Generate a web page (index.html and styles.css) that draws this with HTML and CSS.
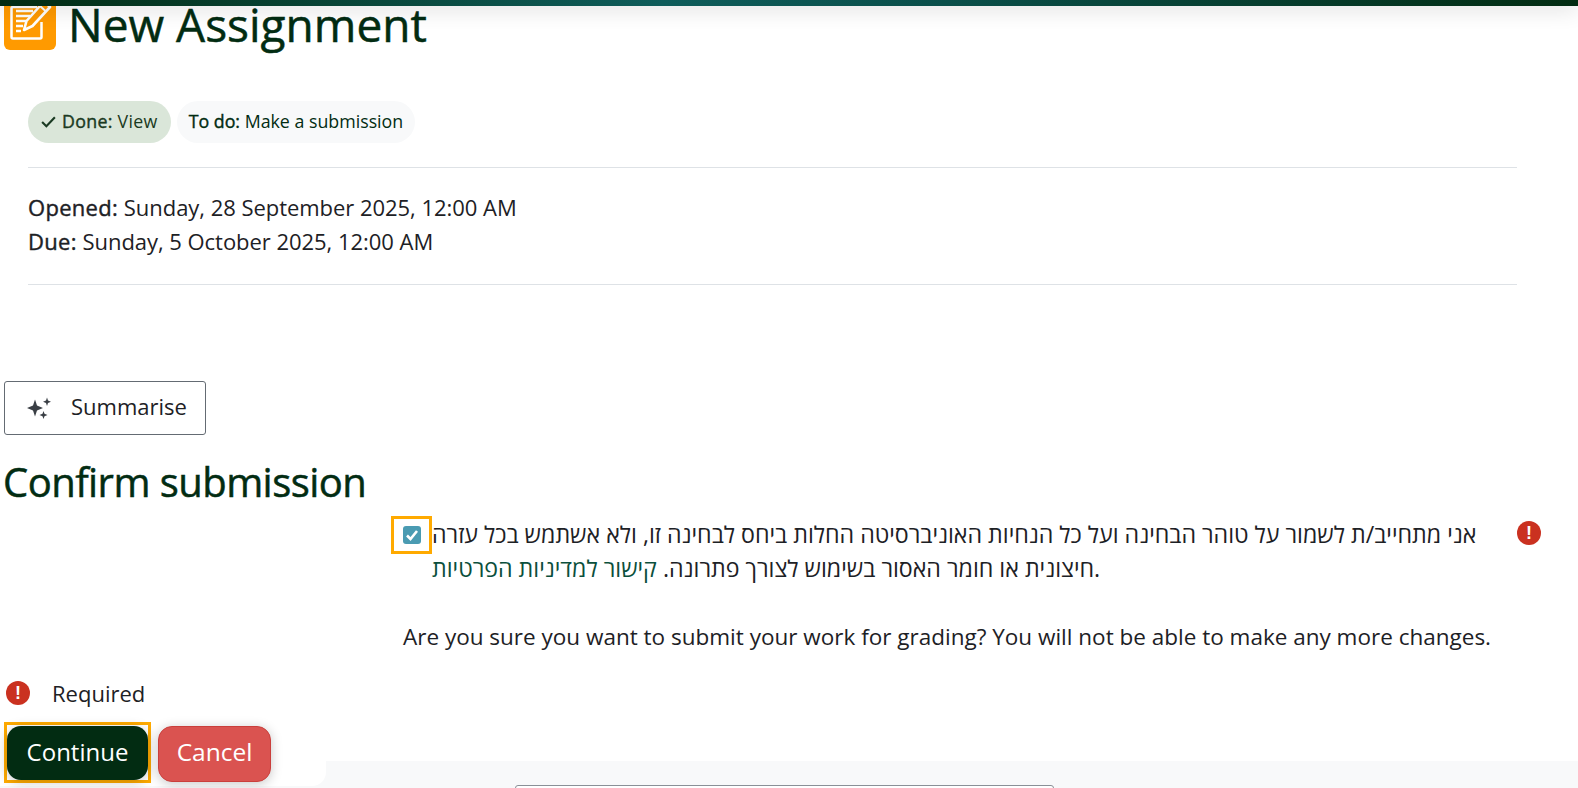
FILE: index.html
```html
<!DOCTYPE html>
<html lang="en">
<head>
<meta charset="utf-8">
<title>New Assignment</title>
<link rel="stylesheet" href="styles.css">
</head>
<body>
<div class="topbar"></div>
<div class="page">
  <header class="title-row">
    <span class="mod-icon">
      <svg viewBox="0 0 52 52" width="52" height="52" aria-hidden="true">
        <path d="M33 9H9a1.500 1.500 0 0 0-1.500 1.500V39A1.500 1.500 0 0 0 9 40.500h27a1.500 1.500 0 0 0 1.500-1.500V24" fill="none" stroke="#fff" stroke-width="2.500"/>
        <path d="M12 13h17M12 18h14M12 23h10M12 28h7M12 33h5" fill="none" stroke="#fff" stroke-width="2.500"/>
        <path d="M40 3.500l6 5.500-17.500 19-8.500 4 2.500-9z" fill="#ff9a00" stroke="#fff" stroke-width="2.600" stroke-linejoin="round"/>
        <path d="M36 8l6 5.500" fill="none" stroke="#fff" stroke-width="2"/>
      </svg>
    </span>
    <h1 class="page-title">New Assignment</h1>
  </header>

  <section class="activity">
    <div class="pills">
      <span class="pill pill-done">
        <svg class="tick" viewBox="0 0 16 16" width="17" height="17" aria-hidden="true"><path d="M2 8.500l4 4 8-8.500" fill="none" stroke="#1a3a22" stroke-width="2"/></svg>
        <span><b>Done:</b> View</span>
      </span>
      <span class="pill pill-todo"><span><b>To do:</b> Make a submission</span></span>
    </div>
    <div class="dates">
      <div><b>Opened:</b> Sunday, 28 September 2025, 12:00 AM</div>
      <div><b>Due:</b> Sunday, 5 October 2025, 12:00 AM</div>
    </div>
  </section>

  <button class="summarise" type="button">
    <svg viewBox="0 0 28 24" width="28" height="24" aria-hidden="true" fill="#3a3f45">
      <path d="M10 3.500l2 6 6 2.500-6 2.500-2 6-2-6-6-2.500 6-2.500z"/>
      <path d="M22 1.500l1 3 3 1.300-3 1.200-1 3-1-3-3-1.200 3-1.300z"/>
      <path d="M18.500 15l1 2.800 3 1.200-3 1.200-1 2.800-1-2.800-3-1.200 3-1.200z"/>
    </svg>
    <span>Summarise</span>
  </button>

  <h2 class="section-title">Confirm submission</h2>

  <form class="confirm">
    <div class="statement">
      <span class="check-focus">
        <span class="check">
          <svg viewBox="0 0 18 18" width="18" height="18" aria-hidden="true"><path d="M4 9.500l3.500 3.500 6.500-8" fill="none" stroke="#fff" stroke-width="2.600"/></svg>
        </span>
      </span>
      <p class="statement-text">אני מתחייב/ת לשמור על טוהר הבחינה ועל כל הנחיות האוניברסיטה החלות ביחס לבחינה זו, ולא אשתמש בכל עזרה חיצונית או חומר האסור בשימוש לצורך פתרונה. <a href="#">קישור למדיניות הפרטיות</a>.</p>
      <span class="alert alert-side">!</span>
    </div>
    <p class="question">Are you sure you want to submit your work for grading? You will not be able to make any more changes.</p>
    <div class="required"><span class="alert">!</span><span>Required</span></div>
  </form>
</div>

<div class="bottom">
  <div class="band"><div class="band-box"></div></div>
  <div class="actions">
    <span class="focus-ring"><button class="btn btn-primary" type="button">Continue</button></span>
    <button class="btn btn-danger" type="button">Cancel</button>
  </div>
</div>
</body>
</html>
```
FILE: styles.css
```css
* { box-sizing: border-box; }
html, body { margin: 0; height: 788px; overflow: hidden; background: #fff; }
body {
  font-family: "Open Sans", "Liberation Sans", sans-serif;
  color: #1d2125;
  font-size: 22px;
  line-height: 34px;
  position: relative;
}
.topbar {
  position: absolute;
  top: 0; left: 0; right: 0;
  height: 6px;
  background: linear-gradient(90deg, #022c12 0%, #0e5c5a 42%, #0a4f4a 60%, #022c12 100%);
  box-shadow: 0 0 22px rgba(0,0,0,.3);
  z-index: 5;
}
.page { height: 763px; padding-left: 4px; }
.title-row { display: flex; align-items: flex-start; gap: 12px; height: 50px; margin-top: -2px; }
.mod-icon { width: 52px; height: 52px; background: #ff9a00; border-radius: 6px; display: block; flex: none; }
.mod-icon svg { display: block; }
.page-title { margin: 0; font-size: 46px; line-height: 52px; font-weight: 400; -webkit-text-stroke: .5px currentColor; color: #022c12; }
.activity { margin: 0 61px 0 24px; padding-top: 53px; }
.pills { display: flex; gap: 6px; padding-bottom: 24px; border-bottom: 1px solid #dee2e6; }
.pill { height: 42px; border-radius: 21px; padding: 0 12px 2px; font-size: 17.800px; line-height: 40px; color: #022c12; display: flex; align-items: center; gap: 5px; white-space: nowrap; }
.pill b { font-weight: 400; -webkit-text-stroke: .4px currentColor; }
.pill-done { background: #dae6d9; color: #1a3a22; letter-spacing: .3px; padding-right: 13px; }
.pill-todo { background: #f8f9fa; }
.tick { flex: none; }
.dates { padding: 22px 0 26px; border-bottom: 1px solid #dee2e6; letter-spacing: -.04px; }
.dates b { font-weight: 400; letter-spacing: .3px; -webkit-text-stroke: .4px currentColor; }
.summarise {
  display: flex; align-items: center; gap: 18px;
  margin-top: 96px; width: 202px; height: 54px; padding: 0 0 5px 20px;
  background: #fff; border: 1px solid #646b73; border-radius: 3px;
  font: inherit; color: #1d2125;
}
.summarise svg { margin-top: 5px; }
.section-title { margin: 19px 0 0 -1px; font-size: 40px; line-height: 56px; font-weight: 400; letter-spacing: -.55px; -webkit-text-stroke: .5px currentColor; color: #022c12; }
.confirm { margin: 0; }
.statement { display: flex; align-items: flex-start; padding-left: 387px; margin-top: 6px; }
.check-focus { width: 41px; height: 38px; border: 3px solid #ffaa00; display: flex; align-items: center; justify-content: center; flex: none; }
.check { width: 18px; height: 18px; background: #4a9bb2; border-radius: 3px; display: block; }
.check svg { display: block; }
.statement-text { margin: 1px 0 0; width: 1077px; flex: none; font-size: 23.200px; }
.statement-text a { color: #0b4f3c; text-decoration: none; }
.alert { width: 24px; height: 24px; border-radius: 50%; background: #ca3120; color: #fff; font-family: "Liberation Sans", sans-serif; font-weight: 700; font-size: 18px; line-height: 24px; text-align: center; flex: none; display: block; }
.alert-side { margin: 5px 0 0 8px; }
.question { margin: 35px 0 0 399px; font-size: 22.500px; }
.required { display: flex; align-items: center; gap: 22px; margin: 22px 0 0 2px; }
.bottom { display: grid; height: 25px; }
.band, .actions { grid-area: 1 / 1; }
.band { background: #f8f9fa; padding: 24px 524px 0 515px; height: 27px; }
.band-box { height: 10px; background: #fff; border: 1px solid #8a9097; border-radius: 3px 3px 0 0; }
.actions {
  width: 326px; height: 64px; margin-top: -39px;
  background: #fff; border-radius: 0 0 14px 0;
  display: flex; align-items: flex-start; padding: 0 0 0 4px; gap: 7px;
}
.focus-ring { border: 3px solid #ffaa00; width: 147px; height: 61px; display: block; flex: none; padding-top: 1px; }
.btn { font: inherit; font-size: 24px; border-radius: 14px; box-shadow: 0 2px 12px rgba(0,0,0,.22); padding: 0 0 2px; }
.btn-primary { width: 141px; height: 54px; background: #022c12; color: #fff; border: 0; display: block; }
.btn-danger { width: 113px; background: #da5350; color: #fff; border: 1px solid #ca3f3c; margin-top: 4px; height: 56px; font-size: 24.500px; padding-bottom: 4px; }
```
